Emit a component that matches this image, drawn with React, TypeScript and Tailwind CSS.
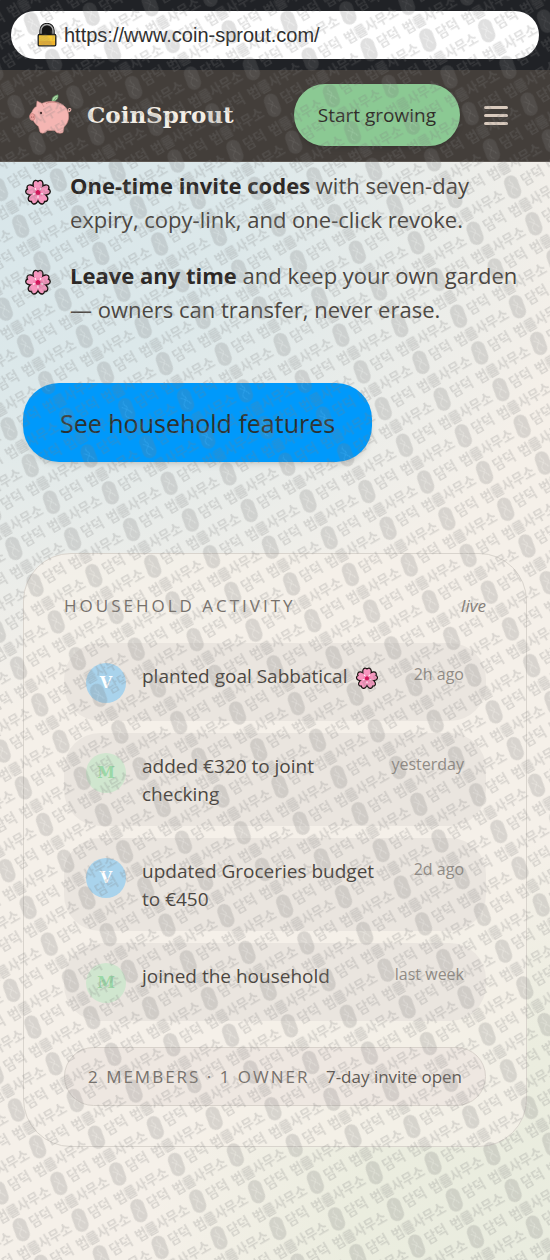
import React from "react";

const PETAL = "M14 14.500C10.800 12 9.200 8.600 9.800 5.200C10.300 3 12.300 2.200 14 4.400C15.700 2.200 17.700 3 18.200 5.200C18.800 8.600 17.200 12 14 14.500Z";
const ANGLES = [0, 72, 144, 216, 288];

function Flower({ className }: { className: string }) {
  return (
    <svg viewBox="0 0 28 28" className={className} role="img" aria-label="cherry blossom">
      {ANGLES.map((a) => (
        <path key={a} d={PETAL} transform={`rotate(${a} 14 14.500)`} fill="#17110f" stroke="#17110f" strokeWidth="2.800" strokeLinejoin="round" />
      ))}
      {ANGLES.map((a) => (
        <path key={a} d={PETAL} transform={`rotate(${a} 14 14.500)`} fill="#f797bf" />
      ))}
      <circle cx="14" cy="14.500" r="5" fill="#f48ab6" />
      {ANGLES.map((a) => (
        <g key={a} transform={`rotate(${a + 36} 14 14.500)`}>
          <path d="M14 14.500V10.500" stroke="#fbd3e4" strokeWidth="0.900" />
          <circle cx="14" cy="10" r="0.800" fill="#fff" />
        </g>
      ))}
      <circle cx="14" cy="14.500" r="2.500" fill="#d4145a" />
    </svg>
  );
}

function Lock() {
  return (
    <svg viewBox="0 0 20 24" className="h-6 w-5 shrink-0" aria-hidden="true">
      <path d="M4.500 12V7.500a5.500 5.500 0 0 1 11 0V12" fill="#161616" stroke="#161616" strokeWidth="4.400" />
      <path d="M4 12V7.500a6 6 0 0 1 12 0V12" fill="none" stroke="#a8a8a8" strokeWidth="1.400" />
      <rect x="1.200" y="11.500" width="17.600" height="11.300" rx="1.200" fill="#f9c933" stroke="#161616" strokeWidth="1.300" />
      <path d="M2 18h16v4H2z" fill="#efb32c" />
    </svg>
  );
}

function Pig() {
  return (
    <svg viewBox="0 0 44 42" className="h-[42px] w-11 shrink-0" aria-hidden="true">
      <path d="M24 7.500C23.500 3 27 1.500 30 0.800C30.500 4 29 7 24 7.500Z" fill="#a9d8a4" stroke="#5f8c60" strokeWidth="0.700" />
      <path d="M24 9L28.500 3" stroke="#5f8c60" strokeWidth="0.700" />
      <path d="M39 18c4 0.500 5-4 2.500-3.500s-1 4 1 2.500" fill="none" stroke="#eab0aa" strokeWidth="1.100" />
      <path d="M8.500 12.500L9 7L14 9.500C20 6 33 6.500 38.500 14.500C42.500 22 40.500 29 36 33L35 38.500C33 39.500 30 39.500 28 38L27 36.500H19L18 38C16 39.500 13 39.500 12 38L10.500 32.500C7.500 30.500 6 28 5 26L3 25C1 23 2 20 4 18C5 15 6.500 13.500 8.500 12.500Z" fill="#f4b5b2" stroke="#d0908b" strokeWidth="0.600" />
      <path d="M18 9.500C22 7.500 28 7.500 32 10" fill="none" stroke="#c98783" strokeWidth="1" />
      <path d="M14 9.500L16 13" stroke="#d0908b" strokeWidth="0.700" />
      <ellipse cx="4.300" cy="23" rx="2.700" ry="3.400" fill="#ee9f9c" stroke="#c27c78" strokeWidth="0.600" />
      <circle cx="3.500" cy="23" r="0.600" fill="#91504f" />
      <circle cx="5.300" cy="23" r="0.600" fill="#91504f" />
      <circle cx="13" cy="19" r="1.200" fill="#4b3030" />
    </svg>
  );
}

const TILE_W = 111.4;
const TILE_H = 42.4;

function Stamp({ x, y }: { x: number; y: number }) {
  return (
    <g transform={`translate(${x} ${y})`}>
      <g transform="rotate(10)">
        <rect x="-7" y="-12" width="14" height="24" rx="7" />
        <path d="M0 -9C-4 -6 4 -3 0 0S-4 6 0 9M-4 -4C0 -1 3 2 4 5" fill="none" stroke="#c4c4c4" strokeWidth="0.800" />
      </g>
      <rect x="52" y="-5" width="11" height="11" opacity="0.500" />
      <text x="11" y="4">담덕</text>
      <text x="40" y="5">법률사무소</text>
    </g>
  );
}

function Watermark() {
  const spots = [
    [0, 0], [TILE_W, 0], [-TILE_W, 0],
    [0, TILE_H], [TILE_W, TILE_H], [-TILE_W, TILE_H],
    [TILE_W / 2, TILE_H / 2], [-TILE_W / 2, TILE_H / 2],
  ];
  return (
    <svg className="pointer-events-none absolute inset-0 z-20 h-full w-full" aria-hidden="true">
      <defs>
        <pattern id="stamps" width={TILE_W} height={TILE_H} patternUnits="userSpaceOnUse" patternTransform="translate(470.700 1117) rotate(-30)">
          <g fill="#7c7c7c" fontSize="13" fontWeight="700" fontFamily="'Noto Sans CJK KR', sans-serif">
            {spots.map(([x, y]) => <Stamp key={`${x},${y}`} x={x} y={y} />)}
          </g>
        </pattern>
      </defs>
      <rect width="100%" height="100%" fill="url(#stamps)" opacity="0.240" />
    </svg>
  );
}

const activity = [
  { who: "V", text: "planted goal Sabbatical", flower: true, when: "2h ago" },
  { who: "M", text: "added €320 to joint checking", flower: false, when: "yesterday" },
  { who: "V", text: "updated Groceries budget to €450", flower: false, when: "2d ago" },
  { who: "M", text: "joined the household", flower: false, when: "last week" },
];

function Avatar({ who }: { who: string }) {
  const tone = who === "V" ? "bg-[#a9d3ec] text-white" : "bg-[#d0e6cf] text-[#9ad8a6]";
  return (
    <span className={`mt-px flex size-10 shrink-0 items-center justify-center rounded-full font-['DejaVu_Serif',serif] text-base font-bold ${tone}`}>
      {who}
    </span>
  );
}

export default function App() {
  return (
    <div className="relative min-h-screen overflow-hidden bg-[#f5f0e9] bg-[radial-gradient(ellipse_600px_540px_at_0px_170px,#d8e6ea_0%,#dce8ea_40%,transparent_100%),radial-gradient(ellipse_400px_420px_at_100%_100%,#e9ecdf_0%,#ebeddf_50%,transparent_100%)] font-['Open_Sans','Noto_Sans_CJK_KR',sans-serif] text-[#4a4540]">
      <div className="bg-[#202226] px-[11px] py-[11px]">
        <div className="flex h-12 items-center gap-[7px] rounded-full bg-white pl-[26px]">
          <Lock />
          <span className="font-['Liberation_Sans',sans-serif] text-xl text-[#2d2d2d]">https://www.coin-sprout.com/</span>
        </div>
      </div>
      <header className="flex h-[92px] items-center border-b border-[#5b5550] bg-[#433e3a] pr-[42px] pb-px pl-7">
        <Pig />
        <a href="#home" className="ml-[15px] font-['DejaVu_Serif',serif] text-[23px] font-bold text-[#f3eee6]">CoinSprout</a>
        <button className="ml-auto h-[62px] rounded-full bg-[#8bc993] px-6 text-[19px] text-[#302d29] shadow-md">Start growing</button>
        <button aria-label="Menu" className="ml-6 flex w-6 flex-col gap-[5px]">
          <span className="h-[3px] w-full rounded bg-[#d9cabd]" />
          <span className="h-[3px] w-full rounded bg-[#d9cabd]" />
          <span className="h-[3px] w-full rounded bg-[#d9cabd]" />
        </button>
      </header>
      <main className="px-[23px] pt-[6px]">
        <ul className="flex flex-col gap-[22px] text-[22px] leading-[34px]">
          <li className="flex gap-[17px]">
            <Flower className="mt-[10px] h-7 w-[30px] shrink-0" />
            <p><strong className="font-bold text-[#2b2725]">One-time invite codes</strong> with seven-day expiry, copy-link, and one-click revoke.</p>
          </li>
          <li className="flex gap-[17px]">
            <Flower className="mt-[10px] h-7 w-[30px] shrink-0" />
            <p><strong className="font-bold text-[#2b2725]">Leave any time</strong> and keep your own garden — owners can transfer, never erase.</p>
          </li>
        </ul>
        <button className="mt-[57px] h-[79px] rounded-[36px] bg-[#0099fb] px-[37px] pt-[2px] text-[25px] text-[#2b302f] shadow-md">See household features</button>
        <section className="mt-[91px] rounded-[48px] border border-[#d9d4cd] bg-[#f5f0e9]/80 p-10">
          <div className="flex items-center justify-between leading-6">
            <h2 className="text-[17px] leading-6 tracking-[3px] text-[#77716b]">HOUSEHOLD ACTIVITY</h2>
            <em className="text-[17px] leading-6 text-[#85807a]">live</em>
          </div>
          <ul className="mt-[25px] flex flex-col gap-3">
            {activity.map((item) => (
              <li key={item.text} className="flex gap-4 rounded-[36px] bg-[#eae5df] px-[22px] pt-[19px] pb-[18px]">
                <Avatar who={item.who} />
                <p className="min-w-0 flex-1 text-[19px] leading-7">
                  {item.text}
                  {item.flower && <Flower className="ml-2 inline h-[26px] w-6" />}
                </p>
                <time className="ml-1 shrink-0 text-base leading-6 text-[#918c86]">{item.when}</time>
              </li>
            ))}
          </ul>
          <div className="mt-[26px] flex h-[59px] items-center justify-between rounded-full border border-[#d8d2cb] bg-[#eee7e1] px-[23px] text-[17px]">
            <span className="tracking-[2px] text-[#77716b]">2 MEMBERS · 1 OWNER</span>
            <span className="text-[#5e5953]">7-day invite open</span>
          </div>
        </section>
      </main>
      <Watermark />
    </div>
  );
}
